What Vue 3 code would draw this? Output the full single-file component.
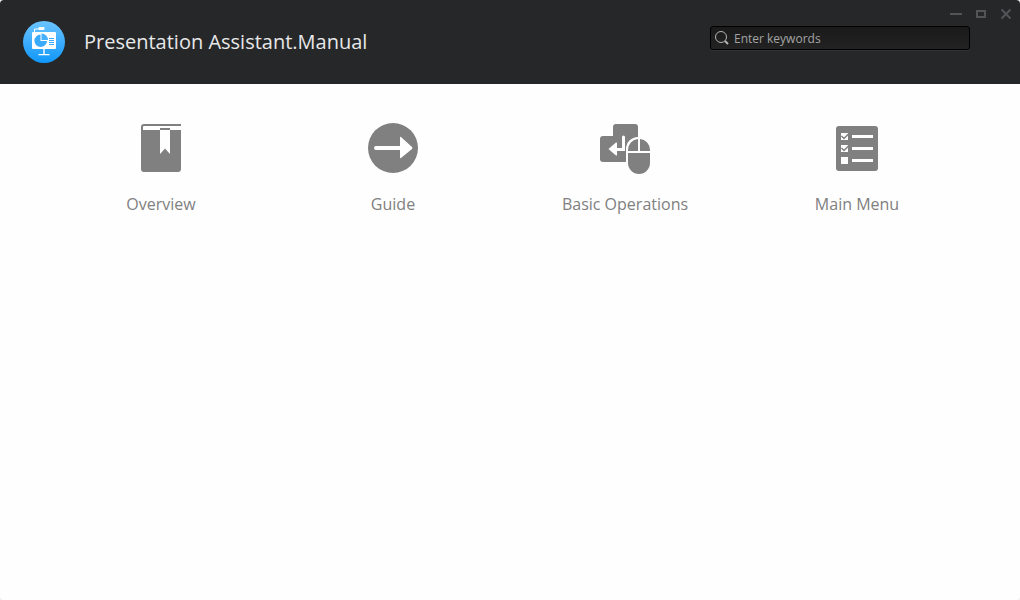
<script setup>
import { ref } from 'vue'

const keywords = ref('')
const sections = [
  { id: 'overview', label: 'Overview' },
  { id: 'guide', label: 'Guide' },
  { id: 'operations', label: 'Basic Operations' },
  { id: 'menu', label: 'Main Menu' },
]
</script>

<template>
  <div class="window">
    <header class="bar">
      <svg class="logo" viewBox="0 0 42 42" aria-hidden="true">
        <defs>
          <linearGradient id="disc" x1="0" y1="0" x2="0" y2="1">
            <stop offset="0" stop-color="#6cc4ff" />
            <stop offset="1" stop-color="#0f97fa" />
          </linearGradient>
        </defs>
        <circle cx="21" cy="21" r="21" fill="url(#disc)" />
        <rect x="9" y="11" width="24" height="17" rx="1" fill="#fff" />
        <path d="M11.500 11V8H16" fill="none" stroke="#fff" />
        <rect x="15.500" y="6" width="6" height="3" rx="1" fill="#fff" />
        <path d="M20.300 28h1.400v5h4.800v1.200h-11V33h4.800z" fill="#fff" />
        <path d="M17.500 13.500A6.300 6.300 0 1 0 24 20H17.500z" fill="#3aaafc" />
        <path d="M18.500 12.500A6.500 6.500 0 0 1 25 19H18.500z" fill="#48b0fd" />
        <path d="M26 17.500h5M26 19.500h5M26 21.500h5M26 23.500h5" stroke="#3aaafc" />
      </svg>
      <h1>Presentation Assistant.Manual</h1>
      <div class="side">
        <div class="controls">
          <button type="button" aria-label="Minimize">
            <svg viewBox="0 0 12 12"><path d="M0 6h12" stroke-width="2" /></svg>
          </button>
          <button type="button" aria-label="Maximize">
            <svg viewBox="0 0 12 12"><path d="M2 3h8v6H2z" stroke-width="2" /></svg>
          </button>
          <button type="button" aria-label="Close">
            <svg viewBox="0 0 12 12"><path d="M1.500 1.500l9 9M10.500 1.500l-9 9" stroke-width="2" /></svg>
          </button>
        </div>
        <label class="search">
          <svg viewBox="0 0 16 16" aria-hidden="true">
            <circle cx="7" cy="7" r="5.500" />
            <path d="M11 11l3 3" stroke-width="2" />
          </svg>
          <input v-model="keywords" type="text" placeholder="Enter keywords" aria-label="Enter keywords" />
        </label>
      </div>
    </header>

    <main class="sections">
      <a v-for="s in sections" :key="s.id" class="section" :href="'#' + s.id">
        <svg viewBox="0 0 52 52" aria-hidden="true">
          <g v-if="s.id === 'overview'">
            <path d="M9 2H46V4H9a1 1 0 0 0-1 1V8H46V47a3 3 0 0 1-3 3H9a3 3 0 0 1-3-3V5a3 3 0 0 1 3-3z" />
            <path class="cut" d="M25 8h10v24l-5-5.500-5 5.500z" />
            <path d="M25 6h10v2H25z" />
          </g>
          <g v-else-if="s.id === 'guide'">
            <circle cx="26" cy="26" r="25" />
            <path class="cut" d="M9 24h24v-8.500q0-1 1-.5l11 10q1 1 0 2l-11 9q-1 .5-1-.5V28H9a2 2 0 0 1 0-4z" />
          </g>
          <g v-else-if="s.id === 'operations'">
            <rect x="14" y="2" width="25" height="38" rx="3" />
            <rect x="1" y="14" width="38" height="26" rx="3" />
            <path class="cut" d="M23 15a1 1 0 0 1 3 0v14H18v3.500q0 1.500-1 1l-7-6q-.8-.5 0-1l7-6q1-.5 1 1V26h5z" />
            <rect class="cut" x="27" y="15" width="26" height="39" rx="12" />
            <path d="M29 29v-1a11 11 0 0 1 10-11v12zM41 17a11 11 0 0 1 10 11v1H41zM29 31h22v10a11 11 0 0 1-22 0z" />
          </g>
          <g v-else>
            <rect x="5" y="4" width="42" height="45" rx="3" />
            <path class="cut" d="M10 11h7v7h-7zM10 23h7v7h-7zM10 35h7v7h-7zM21 13h21v3H21zM21 25h21v3H21zM21 37h21v3H21z" />
            <path class="tick" d="M10.500 14l2.500 2.500 4.500-4.500M10.500 26l2.500 2.500 4.500-4.500" />
          </g>
        </svg>
        <span>{{ s.label }}</span>
      </a>
    </main>
  </div>
</template>

<style>
body {
  margin: 0;
  background: #f0f0f0;
}
</style>

<style scoped>
.window {
  min-height: 100vh;
  border-radius: 4px;
  overflow: hidden;
  background: #fefefe;
  font-family: "Open Sans", "Noto Sans", sans-serif;
}
.bar {
  display: flex;
  align-items: center;
  height: 84px;
  padding-left: 23px;
  background: #252729;
}
.logo {
  width: 42px;
  height: 42px;
}
h1 {
  flex: 1;
  margin: 0 0 0 19px;
  font-size: 20px;
  font-weight: 400;
  line-height: 28px;
  color: #e8e8e8;
}
.side {
  display: flex;
  flex-direction: column;
  align-items: flex-end;
  align-self: flex-start;
  padding-top: 8px;
}
.controls {
  display: flex;
  gap: 13px;
  padding-right: 8px;
}
.controls button {
  width: 12px;
  height: 12px;
  padding: 0;
  border: 0;
  background: none;
}
.controls svg {
  display: block;
  fill: none;
  stroke: #535456;
}
.search {
  display: flex;
  align-items: center;
  gap: 4px;
  box-sizing: border-box;
  width: 260px;
  height: 24px;
  margin: 6px 50px 0 0;
  padding: 0 3px;
  border: 1px solid #000;
  border-radius: 3px;
  background: linear-gradient(#1a1a1a, #222);
  box-shadow: 0 1px 0 #303234;
}
.search svg {
  width: 16px;
  height: 16px;
  fill: none;
  stroke: #b4b4b4;
}
.search input {
  flex: 1;
  min-width: 0;
  padding: 0;
  border: 0;
  outline: 0;
  background: none;
  font: 12px "Open Sans", "Noto Sans", sans-serif;
  color: #b4b4b4;
}
.search input::placeholder {
  color: #a4a4a4;
  opacity: 1;
}
.sections {
  display: grid;
  grid-template-columns: repeat(4, 1fr);
  padding: 38px 47px 0 45px;
}
.section {
  display: flex;
  flex-direction: column;
  align-items: center;
  gap: 18px;
  font-size: 16px;
  line-height: 24px;
  color: #808080;
  text-decoration: none;
}
.section svg {
  width: 52px;
  height: 52px;
  fill: #808080;
}
.section .cut {
  fill: #fefefe;
}
.section .tick {
  fill: none;
  stroke: #808080;
  stroke-width: 1.500;
}
</style>
